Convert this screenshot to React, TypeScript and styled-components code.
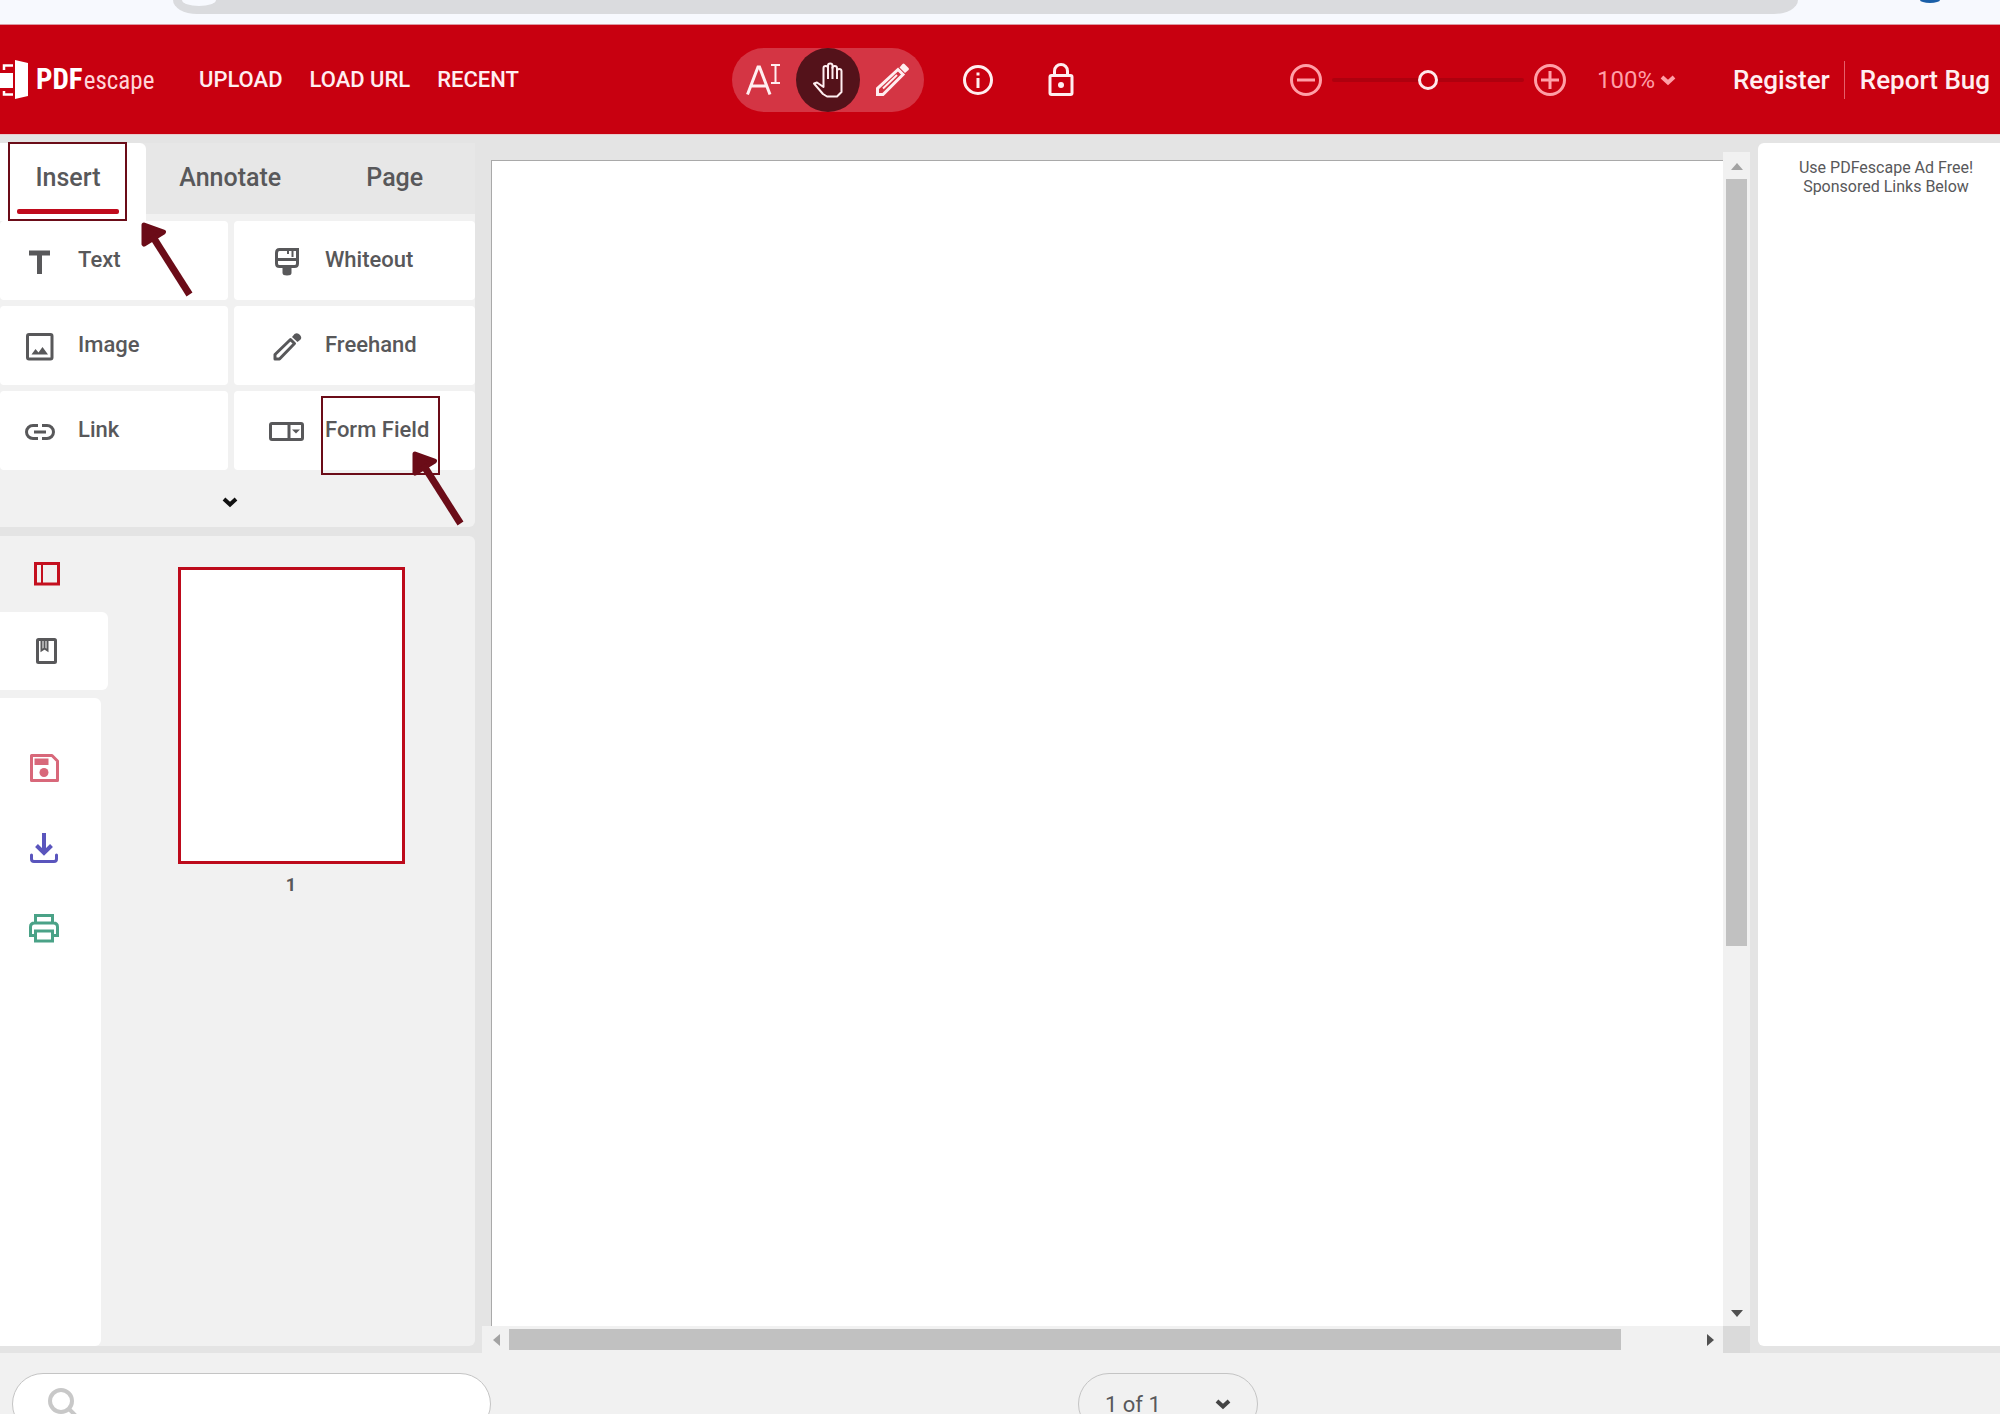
import React from "react";
import styled, { createGlobalStyle } from "styled-components";

const red = "#c80010";
const ink = "#58585a";
const maroon = "#6b0c18";
const panel = "#f1f1f1";

const GlobalStyle = createGlobalStyle`
  * { box-sizing: border-box; }
  html, body { margin: 0; height: 100%; overflow: hidden; }
  body { font-family: Roboto, "Liberation Sans", sans-serif; background: #e4e4e4; color: ${ink}; }
  button, select, input { font: inherit; color: inherit; background: none; border: 0; padding: 0; margin: 0; }
  button { cursor: pointer; display: flex; align-items: center; }
  a { color: inherit; text-decoration: none; }
  svg { display: block; flex: none; overflow: visible; }
`;

const Page = styled.div`
  display: flex;
  flex-direction: column;
  height: 100vh;
  overflow: hidden;
`;

/* Browser strip */
const BrowserStrip = styled.div`
  flex: 0 0 25px;
  display: flex;
  align-items: flex-start;
  padding: 0 60px 0 173px;
  background: #f7f9fe;
  border-bottom: 1px solid #dc9aa4;
`;
const AddressBar = styled.div`
  flex: 1;
  height: 14px;
  margin-right: 122px;
  padding-left: 9px;
  background: #dadbde;
  border-radius: 0 0 24px 24px / 0 0 14px 14px;
`;
const SiteChip = styled.div`
  width: 34px;
  height: 6px;
  background: #f7f9fe;
  border-radius: 0 0 17px 17px / 0 0 6px 6px;
`;
const ProfileDot = styled.div`
  width: 20px;
  height: 3px;
  background: #1b5fa8;
  border-radius: 0 0 10px 10px / 0 0 3px 3px;
`;

/* Header */
const Header = styled.header`
  flex: 0 0 109px;
  display: grid;
  grid-template-columns: 732px 1fr auto;
  align-items: center;
  padding-right: 10px;
  background: ${red};
  color: #ffeef0;
`;
const Brand = styled.div`
  display: flex;
  align-items: center;
`;
const Logo = styled.a`
  display: flex;
  align-items: center;
  width: 199px;
  gap: 8px;
  color: #fff;
`;
const Wordmark = styled.span`
  display: flex;
  align-items: baseline;
  gap: 1px;
  font-family: "Roboto Condensed", "Liberation Sans Narrow", "Liberation Sans", sans-serif;
  line-height: 40px;
`;
const WordPdf = styled.strong`
  font-size: 29px;
`;
const WordEscape = styled.span`
  font-size: 25px;
  color: #ffd5d9;
`;
const Nav = styled.nav`
  display: flex;
  gap: 27px;
  font-size: 22px;
  font-weight: 500;
  line-height: 28px;
`;
const Tools = styled.div`
  display: flex;
  align-items: center;
`;
const ToolPill = styled.div`
  display: flex;
  margin-right: 22px;
  border-radius: 32px;
  background: #d43544;
`;
const ToolButton = styled.button<{ $active?: boolean }>`
  width: 64px;
  height: 64px;
  justify-content: center;
  border-radius: 32px;
  background: ${(p) => (p.$active ? "#54121a" : "transparent")};
`;
const RoundTools = styled.div`
  display: flex;
  gap: 19px;
`;
const HeaderRight = styled.div`
  display: flex;
  align-items: center;
`;
const ZoomGroup = styled.div`
  display: flex;
  align-items: center;
  gap: 10px;
  color: #ff9fa7;
`;
const ZoomSlider = styled.input`
  appearance: none;
  width: 192px;
  height: 20px;
  &::-webkit-slider-runnable-track {
    height: 4px;
    border-radius: 2px;
    background: #ae000e;
  }
  &::-webkit-slider-thumb {
    appearance: none;
    width: 20px;
    height: 20px;
    margin-top: -8px;
    border: 3px solid #ffe9eb;
    border-radius: 10px;
    background: ${red};
  }
`;
const SelectWrap = styled.label`
  position: relative;
  display: flex;
  align-items: center;
`;
const SelectArrow = styled.span<{ $right: number }>`
  position: absolute;
  right: ${(p) => p.$right}px;
  pointer-events: none;
`;
const ZoomLevel = styled(SelectWrap)`
  margin-left: 31px;
  color: #ff9fa7;
`;
const ZoomSelect = styled.select`
  appearance: none;
  width: 79px;
  font-size: 24px;
  line-height: 28px;
`;
const Account = styled.div`
  display: flex;
  align-items: center;
  margin-left: 57px;
  font-size: 26px;
  font-weight: 500;
  line-height: 30px;
`;
const AccountLink = styled.a<{ $divided?: boolean }>`
  padding: 4px 0;
  margin-left: ${(p) => (p.$divided ? "14px" : "0")};
  padding-left: ${(p) => (p.$divided ? "15px" : "0")};
  border-left: ${(p) => (p.$divided ? "1px solid #e5606b" : "0")};
`;

/* Main */
const Main = styled.main`
  flex: 1;
  min-height: 0;
  display: grid;
  grid-template-columns: 475px minmax(0, 1fr) 242px;
  border-top: 1px solid #e9c9cc;
`;
const Sidebar = styled.aside`
  position: relative;
  display: flex;
  flex-direction: column;
  gap: 9px;
  min-height: 0;
  padding: 8px 0 7px;
`;
const InsertPanel = styled.section`
  background: ${panel};
  border-radius: 0 0 6px 0;
`;
const Tabs = styled.div`
  display: flex;
  align-items: flex-start;
  gap: 4px;
  background: linear-gradient(#e7e7e7 71px, ${panel} 71px);
`;
const Tab = styled.button<{ $active?: boolean }>`
  flex: ${(p) => (p.$active ? "0 0 146px" : "1")};
  flex-direction: column;
  align-items: stretch;
  height: 78px;
  padding: ${(p) => (p.$active ? "18px 27px 0 17px" : "18px 0 0")};
  font-size: 25px;
  font-weight: 500;
  line-height: 34px;
  text-align: center;
  border-radius: 0 6px 0 0;
  background: ${(p) => (p.$active ? "#fff" : "transparent")};
`;
const TabUnderline = styled.span`
  height: 5px;
  margin-top: 14px;
  border-radius: 2px;
  background: #c00a1c;
`;
const CardGrid = styled.div`
  display: grid;
  grid-template-columns: 228px 1fr;
  gap: 6px;
`;
const Card = styled.button<{ $wide?: boolean }>`
  height: 79px;
  padding-left: ${(p) => (p.$wide ? "33px" : "20px")};
  gap: 18px;
  background: #fff;
  border-radius: 4px;
`;
const CardIcon = styled.span`
  display: flex;
  justify-content: center;
  width: 40px;
  padding-top: 2px;
`;
const CardLabel = styled.span`
  padding-bottom: 2px;
  font-size: 22px;
  font-weight: 500;
  line-height: 28px;
`;
const MoreButton = styled.button`
  width: 100%;
  height: 57px;
  padding: 6px 15px 0 0;
  justify-content: center;
`;
const PagesPanel = styled.section`
  flex: 1;
  min-height: 0;
  display: grid;
  grid-template-columns: 108px 1fr;
  background: ${panel};
  border-radius: 0 6px 6px 0;
`;
const Rail = styled.div`
  display: flex;
  flex-direction: column;
`;
const RailTab = styled.button<{ $raised?: boolean }>`
  height: ${(p) => (p.$raised ? "78px" : "76px")};
  padding-left: 34px;
  border-radius: 0 6px 6px 0;
  background: ${(p) => (p.$raised ? "#fff" : "transparent")};
`;
const RailActions = styled.div`
  flex: 1;
  display: flex;
  flex-direction: column;
  width: 101px;
  margin-top: 8px;
  padding-top: 30px;
  background: #fff;
  border-radius: 0 6px 6px 0;
`;
const RailAction = styled.button`
  height: 80px;
  padding-left: 28px;
`;
const Thumbs = styled.div`
  display: flex;
  flex-direction: column;
  align-items: center;
  gap: 10px;
  padding: 31px 1px 0 0;
`;
const Thumb = styled.button`
  width: 227px;
  height: 297px;
  border: 3px solid #bd0a1b;
  background: #fff;
`;
const ThumbLabel = styled.span`
  font-size: 18px;
  font-weight: 700;
  line-height: 22px;
`;

/* Callouts */
const Callout = styled.div<{ $x: number; $y: number }>`
  position: absolute;
  left: ${(p) => p.$x}px;
  top: ${(p) => p.$y}px;
  width: 119px;
  height: 79px;
  border: 2px solid ${maroon};
  pointer-events: none;
`;
const Pointer = styled.svg<{ $x: number; $y: number }>`
  position: absolute;
  left: ${(p) => p.$x}px;
  top: ${(p) => p.$y}px;
`;

/* Viewer */
const Viewer = styled.section`
  display: grid;
  grid-template-columns: minmax(0, 1fr) 27px;
  grid-template-rows: minmax(0, 1fr) 27px;
  margin: 17px 8px 0 7px;
`;
const Desk = styled.div`
  padding: 8px 0 0 9px;
`;
const Sheet = styled.div`
  height: 100%;
  background: #fff;
  border: solid #a9a9a9;
  border-width: 1px 0 0 1px;
`;
const ScrollBar = styled.div<{ $vertical?: boolean }>`
  display: flex;
  flex-direction: ${(p) => (p.$vertical ? "column" : "row")};
  background: #f1f1f1;
`;
const ScrollStep = styled.button`
  flex: 0 0 27px;
  height: 27px;
  justify-content: center;
`;
const ScrollTrack = styled.div<{ $vertical?: boolean }>`
  flex: 1;
  padding: ${(p) => (p.$vertical ? "0 3px" : "3px 0")};
`;
const ScrollThumb = styled.div<{ $vertical?: boolean }>`
  width: ${(p) => (p.$vertical ? "100%" : "93.7%")};
  height: ${(p) => (p.$vertical ? "68.5%" : "100%")};
  background: #c1c1c1;
`;
const ScrollCorner = styled.div`
  background: #dadada;
`;
const Ad = styled.aside`
  margin: 8px 0 7px;
  padding: 15px 0 0 14px;
  background: #fff;
  border-radius: 6px 0 0 6px;
  font-size: 16px;
  line-height: 19px;
  text-align: center;
`;
const AdLine = styled.a`
  display: block;
`;

/* Footer */
const Footer = styled.footer`
  flex: 0 0 61px;
  display: flex;
  align-items: flex-start;
  padding: 20px 12px 0;
  overflow: hidden;
  background: ${panel};
`;
const SearchBox = styled.label`
  display: flex;
  align-items: center;
  width: 479px;
  height: 62px;
  padding: 0 34px;
  gap: 16px;
  border: 1px solid #c4c4c4;
  border-radius: 31px;
  background: #fff;
`;
const SearchInput = styled.input`
  flex: 1;
  min-width: 0;
  font-size: 22px;
  outline: 0;
`;
const PageWrap = styled(SelectWrap)`
  margin-left: 587px;
`;
const PageSelect = styled.select`
  appearance: none;
  width: 180px;
  height: 62px;
  padding: 0 26px;
  border: 1px solid #c4c4c4;
  border-radius: 31px;
  font-size: 22px;
`;

type StrokeProps = { w: number; h: number; sw?: number; color?: string; children: React.ReactNode };
const Line = ({ w, h, sw = 3, color = "currentColor", children }: StrokeProps) => (
  <svg width={w} height={h} viewBox={`0 0 ${w} ${h}`} fill="none" stroke={color} strokeWidth={sw} aria-hidden="true">
    {children}
  </svg>
);

const LogoMark = () => (
  <svg width="28" height="40" viewBox="0 0 28 40" fill="#fff" aria-hidden="true">
    <path d="M15 0 28 3V36L15 39ZM0 13h13v15H0Z" />
    <path d="M4 10V5.500h9M4 31v3.500h9" fill="none" stroke="#fff" strokeWidth="2.500" />
  </svg>
);
const TextCursorIcon = () => (
  <Line w={36} h={34} sw={3}>
    <path d="M1.500 31.500 12 4h1.500L24 31.500M5 23h16" />
    <path d="M25 2h9M25 20h9M29.500 2v18" strokeWidth="2" />
  </Line>
);
const HandIcon = () => (
  <Line w={32} h={38} sw={2}>
    <path strokeLinejoin="round" d="M2 22.500 5 21.500 11.500 26V7q0-2 2.200-2T16 7V4.500q0-2 2.200-2t2.300 2V7q0-2 2.200-2T25 7v3q0-2 2.200-2t2.300 2V31L25 35.500H15L11 33Z" />
    <path d="M16 6v12M20.500 6v12M25 8v10" />
  </Line>
);
const HeaderPencil = () => (
  <Line w={34} h={34} sw={3}>
    <path d="M2.500 31.500v-6L23 6.500l5 5L8 31.500Z" />
    <path d="M8 25.500 22 12" strokeWidth="2" />
    <path d="m24.500 4.500 3-3.500q1-1 2 0l4 4q1 1 0 2l-3.500 3Z" fill="currentColor" stroke="none" />
  </Line>
);
const InfoIcon = () => (
  <Line w={32} h={32} sw={3}>
    <circle cx="16" cy="16" r="13.500" />
    <path d="M16 14v10M16 8.500v3" />
  </Line>
);
const LockIcon = () => (
  <Line w={26} h={34} sw={3}>
    <rect x="2" y="12.500" width="22" height="19" rx="1.500" />
    <path d="M6.500 12V8a6.500 6.500 0 0 1 13 0v4" />
    <circle cx="13" cy="22" r="3" fill="currentColor" stroke="none" />
  </Line>
);
const ZoomIcon = ({ plus }: { plus?: boolean }) => (
  <Line w={32} h={32} sw={3}>
    <circle cx="16" cy="16" r="14.500" />
    <path d={plus ? "M7 16h18M16 7v18" : "M7 16h18"} />
  </Line>
);
const Chevron = ({ color }: { color?: string }) => (
  <Line w={16} h={10} sw={4} color={color}>
    <path d="m2 2 6 5.500L14 2" />
  </Line>
);
const TIcon = () => (
  <Line w={22} h={24} sw={5}>
    <path d="M0 3h21M10.500 3v21" />
  </Line>
);
const BrushIcon = () => (
  <Line w={24} h={28} sw={3}>
    <path d="M4.500 1.500h18v14q0 3-3 3h-15q-3 0-3-3V5q0-3.500 3-3.500ZM1.500 11.500h21" />
    <path d="M13 2v4M17.500 2v7" strokeWidth="2" />
    <path d="M7.500 19h9v6q0 2.500-4.500 2.500T7.500 25Z" fill="currentColor" stroke="none" />
  </Line>
);
const ImageIcon = () => (
  <Line w={28} h={28} sw={3}>
    <rect x="1.500" y="1.500" width="24.500" height="24.500" rx="1.500" />
    <path d="m5.500 21.500 4-5.500 3 3.500 4-5.500 5.500 7.500Z" fill="currentColor" stroke="none" />
  </Line>
);
const PencilIcon = () => (
  <Line w={28} h={28} sw={3}>
    <path strokeLinejoin="round" d="M2 26v-4.500L17.500 6.500l4 4L6.500 26Z" />
    <path d="m19 4 2.500-3q3-2 5.500 1t0 5L24.500 9Z" fill="currentColor" stroke="none" />
  </Line>
);
const LinkIcon = () => (
  <Line w={30} h={16} sw={3}>
    <path d="M13 1.500H8a6.500 6.500 0 0 0 0 13h5M17 1.500h5a6.500 6.500 0 0 1 0 13h-5M9 8h12" />
  </Line>
);
const FieldIcon = () => (
  <Line w={36} h={19} sw={3}>
    <rect x="1.500" y="1.500" width="32" height="16" rx="1.500" />
    <path d="M20 2v15" />
    <path d="M23 7.500h8l-4 4Z" fill="currentColor" stroke="none" />
  </Line>
);
const PanelIcon = () => (
  <Line w={26} h={24} sw={3} color="#c4101f">
    <rect x="1.500" y="1.500" width="23" height="20.500" />
    <path d="M8 1v21" strokeWidth="2" />
  </Line>
);
const BookmarkIcon = () => (
  <Line w={26} h={26} sw={3}>
    <rect x="3.500" y="1.500" width="18" height="23" rx="1" />
    <path d="M7.500 2v10.500l3-2 3 2V2M10.500 2v8" strokeWidth="2" />
  </Line>
);
const SaveIcon = () => (
  <Line w={32} h={30} sw={3} color="#d8687a">
    <path strokeLinejoin="round" d="M3.500 2.500H24l5.500 5.500v19.500h-26Z" />
    <path d="M6.500 5.500h14v6.500h-14Z" fill="#d8687a" stroke="none" />
    <circle cx="16" cy="19.500" r="4.500" fill="#d8687a" stroke="none" />
  </Line>
);
const DownloadIcon = () => (
  <Line w={32} h={32} sw={4} color="#5a55bd">
    <path d="M16 1v20M8.500 13.500l7.500 7.500 7.500-7.500" />
    <path strokeLinecap="round" strokeWidth="3" d="M3.500 23v4q0 2.500 2.500 2.500h20q2.500 0 2.500-2.500v-4" />
  </Line>
);
const PrintIcon = () => (
  <Line w={32} h={30} sw={3} color="#4aa287">
    <path d="M7.500 10V2.500h17V10M8 22.500H2.500V14q0-4 4-4h19q4 0 4 4v8.500H24" />
    <rect x="7.500" y="18" width="17" height="10" />
  </Line>
);
const SearchIcon = () => (
  <Line w={34} h={34} sw={4} color="#c8c8c8">
    <circle cx="14" cy="14" r="11" />
    <path d="m21.500 21.500 11 11" />
  </Line>
);
const Triangle = ({ d, color = "#505050" }: { d: string; color?: string }) => (
  <svg width="12" height="12" viewBox="0 0 12 12" fill={color} aria-hidden="true">
    <path d={d} />
  </svg>
);

const ArrowPointer = ({ x, y }: { x: number; y: number }) => (
  <Pointer $x={x} $y={y} width="52" height="76" viewBox="0 0 52 76" fill={maroon} stroke={maroon}>
    <path d="M3 3 22.500 10 3 22Z" strokeWidth="5" strokeLinejoin="round" />
    <path d="M12 15 48.500 72.500" strokeWidth="7" />
  </Pointer>
);

const cards = [
  { label: "Text", icon: <TIcon /> },
  { label: "Whiteout", icon: <BrushIcon /> },
  { label: "Image", icon: <ImageIcon /> },
  { label: "Freehand", icon: <PencilIcon /> },
  { label: "Link", icon: <LinkIcon /> },
  { label: "Form Field", icon: <FieldIcon /> },
];

export default function App() {
  return (
    <Page>
      <GlobalStyle />
      <BrowserStrip>
        <AddressBar>
          <SiteChip />
        </AddressBar>
        <ProfileDot />
      </BrowserStrip>

      <Header>
        <Brand>
          <Logo href="#">
            <LogoMark />
            <Wordmark>
              <WordPdf>PDF</WordPdf>
              <WordEscape>escape</WordEscape>
            </Wordmark>
          </Logo>
          <Nav>
            <a href="#upload">UPLOAD</a>
            <a href="#load">LOAD URL</a>
            <a href="#recent">RECENT</a>
          </Nav>
        </Brand>
        <Tools>
          <ToolPill>
            <ToolButton aria-label="Select text"><TextCursorIcon /></ToolButton>
            <ToolButton aria-label="Pan" $active><HandIcon /></ToolButton>
            <ToolButton aria-label="Edit"><HeaderPencil /></ToolButton>
          </ToolPill>
          <RoundTools>
            <ToolButton aria-label="Information"><InfoIcon /></ToolButton>
            <ToolButton aria-label="Security"><LockIcon /></ToolButton>
          </RoundTools>
        </Tools>
        <HeaderRight>
          <ZoomGroup>
            <button aria-label="Zoom out"><ZoomIcon /></button>
            <ZoomSlider type="range" min={0} max={200} defaultValue={100} aria-label="Zoom" />
            <button aria-label="Zoom in"><ZoomIcon plus /></button>
          </ZoomGroup>
          <ZoomLevel>
            <ZoomSelect aria-label="Zoom level">
              <option>100%</option>
            </ZoomSelect>
            <SelectArrow $right={0}><Chevron /></SelectArrow>
          </ZoomLevel>
          <Account>
            <AccountLink href="#register">Register</AccountLink>
            <AccountLink href="#bug" $divided>Report Bug</AccountLink>
          </Account>
        </HeaderRight>
      </Header>

      <Main>
        <Sidebar>
          <InsertPanel>
            <Tabs role="tablist">
              <Tab role="tab" aria-selected="true" $active>
                Insert
                <TabUnderline />
              </Tab>
              <Tab role="tab" aria-selected="false">Annotate</Tab>
              <Tab role="tab" aria-selected="false">Page</Tab>
            </Tabs>
            <CardGrid>
              {cards.map((c, i) => (
                <Card key={c.label} $wide={i % 2 === 1}>
                  <CardIcon>{c.icon}</CardIcon>
                  <CardLabel>{c.label}</CardLabel>
                </Card>
              ))}
            </CardGrid>
            <MoreButton aria-label="More tools"><Chevron color="#111" /></MoreButton>
          </InsertPanel>

          <PagesPanel>
            <Rail>
              <RailTab aria-label="Page thumbnails"><PanelIcon /></RailTab>
              <RailTab aria-label="Bookmarks" $raised><BookmarkIcon /></RailTab>
              <RailActions>
                <RailAction aria-label="Save"><SaveIcon /></RailAction>
                <RailAction aria-label="Download"><DownloadIcon /></RailAction>
                <RailAction aria-label="Print"><PrintIcon /></RailAction>
              </RailActions>
            </Rail>
            <Thumbs>
              <Thumb aria-label="Page 1" />
              <ThumbLabel>1</ThumbLabel>
            </Thumbs>
          </PagesPanel>

          <Callout $x={8} $y={7}>
            <ArrowPointer x={131} y={78} />
          </Callout>
          <Callout $x={321} $y={261}>
            <ArrowPointer x={89} y={53} />
          </Callout>
        </Sidebar>

        <Viewer>
          <Desk>
            <Sheet />
          </Desk>
          <ScrollBar $vertical>
            <ScrollStep aria-label="Scroll up"><Triangle d="M0 10h12L6 3Z" color="#a3a3a3" /></ScrollStep>
            <ScrollTrack $vertical><ScrollThumb $vertical /></ScrollTrack>
            <ScrollStep aria-label="Scroll down"><Triangle d="M0 3h12L6 10Z" /></ScrollStep>
          </ScrollBar>
          <ScrollBar>
            <ScrollStep aria-label="Scroll left"><Triangle d="M10 0v12L3 6Z" color="#a3a3a3" /></ScrollStep>
            <ScrollTrack><ScrollThumb /></ScrollTrack>
            <ScrollStep aria-label="Scroll right"><Triangle d="M3 0v12l7-6Z" /></ScrollStep>
          </ScrollBar>
          <ScrollCorner />
        </Viewer>

        <Ad>
          <AdLine href="#adfree">Use PDFescape Ad Free!</AdLine>
          <AdLine as="span">Sponsored Links Below</AdLine>
        </Ad>
      </Main>

      <Footer>
        <SearchBox>
          <SearchIcon />
          <SearchInput type="search" aria-label="Search document" />
        </SearchBox>
        <PageWrap>
          <PageSelect aria-label="Current page">
            <option>1 of 1</option>
          </PageSelect>
          <SelectArrow $right={27}><Chevron color="#444" /></SelectArrow>
        </PageWrap>
      </Footer>
    </Page>
  );
}
